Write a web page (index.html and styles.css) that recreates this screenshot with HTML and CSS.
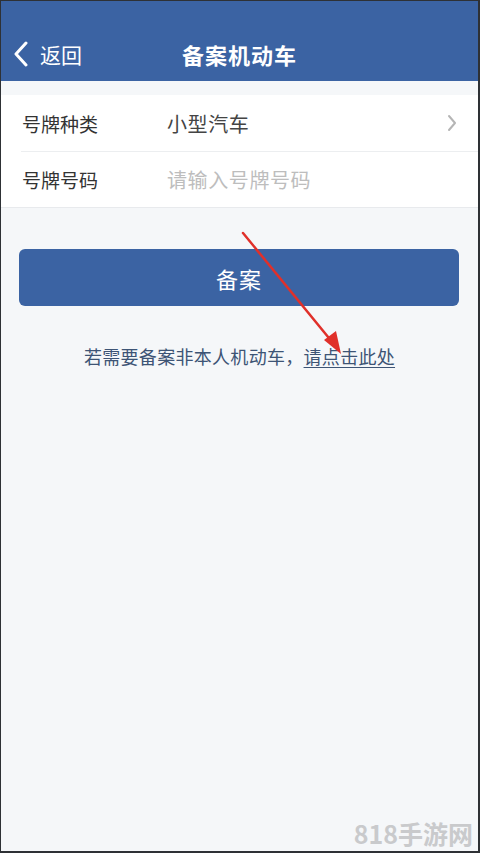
FILE: index.html
```html
<!DOCTYPE html>
<html lang="zh">
<head>
<meta charset="utf-8">
<link rel="stylesheet" href="styles.css">
</head>
<body>
<div class="page">
  <header class="topbar">
    <div class="back">
      <svg class="back-icon" width="18" height="26" viewBox="0 0 18 26"><path d="M14 2 L4 13 L14 24" fill="none" stroke="#fff" stroke-width="3" stroke-linecap="round" stroke-linejoin="round"/></svg>
      <span>返回</span>
    </div>
    <h1 class="title">备案机动车</h1>
  </header>

  <section class="form">
    <div class="row">
      <span class="label">号牌种类</span>
      <span class="value">小型汽车</span>
      <svg class="chev" width="12" height="20" viewBox="0 0 12 20"><path d="M3 3 L9 10 L3 17" fill="none" stroke="#b5b5b5" stroke-width="2" stroke-linecap="round" stroke-linejoin="round"/></svg>
    </div>
    <div class="row">
      <span class="label">号牌号码</span>
      <span class="value placeholder">请输入号牌号码</span>
    </div>
  </section>

  <div class="btn">备案</div>

  <p class="note">若需要备案非本人机动车，<span class="link">请点击此处</span></p>

  <div class="spacer"></div>
  <div class="watermark">818手游网</div>

  <svg class="arrow" width="480" height="853" viewBox="0 0 480 853">
    <line x1="243" y1="233" x2="333" y2="343" stroke="#e0302a" stroke-width="2.5" stroke-linecap="round"/>
    <polygon points="341,354 324,340 336,331" fill="#e0302a"/>
  </svg>
</div>
</body>
</html>
```

FILE: styles.css
```css
* { box-sizing: border-box; margin: 0; padding: 0; }
html, body { width: 480px; height: 853px; }
body {
  font-family: "Noto Sans CJK SC", "Noto Sans", sans-serif;
  background: #2e3135;
}
.page {
  position: relative;
  width: 480px;
  height: 853px;
  background: #f5f7f9;
  border-left: 1px solid #2e3135;
  border-right: 2px solid #2e3135;
  border-top: 1px solid #2e3135;
  border-bottom: 2px solid #2e3135;
  display: flex;
  flex-direction: column;
  overflow: hidden;
}
.topbar {
  height: 80px;
  background: #3b63a3;
  display: flex;
  align-items: flex-end;
  padding-bottom: 14px;
  position: relative;
  color: #fff;
}
.back {
  display: flex;
  align-items: center;
  gap: 10px;
  padding-left: 11px;
  font-size: 21px;
  line-height: 26px;
}
.title {
  position: absolute;
  left: 0; right: 0;
  bottom: 14px;
  text-align: center;
  font-size: 22px;
  font-weight: 700;
  line-height: 26px;
  letter-spacing: 1px;
}
.form {
  margin-top: 14px;
  background: #fff;
  border-bottom: 1px solid #e8eaed;
}
.row {
  height: 56px;
  display: flex;
  align-items: center;
  padding-left: 21px;
  padding-right: 20px;
  position: relative;
  font-size: 19px;
}
.row + .row { border-top: 1px solid #eceef0; margin-left: 20px; padding-left: 1px; }
.label { color: #333; width: 145px; }
.value { color: #444; flex: 1; font-size: 20px; letter-spacing: 0.6px; }
.placeholder { color: #bdbdbd; }
.btn {
  margin: 41px 19px 0 18px;
  height: 57px;
  border-radius: 6px;
  background: #3b63a3;
  color: #fff;
  font-size: 22px;
  display: flex;
  align-items: center;
  justify-content: center;
  letter-spacing: 1px;
}
.note {
  margin-top: 38px;
  text-align: center;
  font-size: 18px;
  letter-spacing: 0.3px;
  color: #3d5475;
  line-height: 24px;
}
.link { text-decoration: underline; text-underline-offset: 3px; }
.spacer { flex: 1; }
.watermark {
  align-self: flex-end;
  margin-right: 5px;
  margin-bottom: 2px;
  font-size: 25px;
  font-weight: 700;
  color: #c9cacc;
  line-height: 32px;
}
.arrow {
  position: absolute;
  left: -1px;
  top: -1px;
  pointer-events: none;
}
```
